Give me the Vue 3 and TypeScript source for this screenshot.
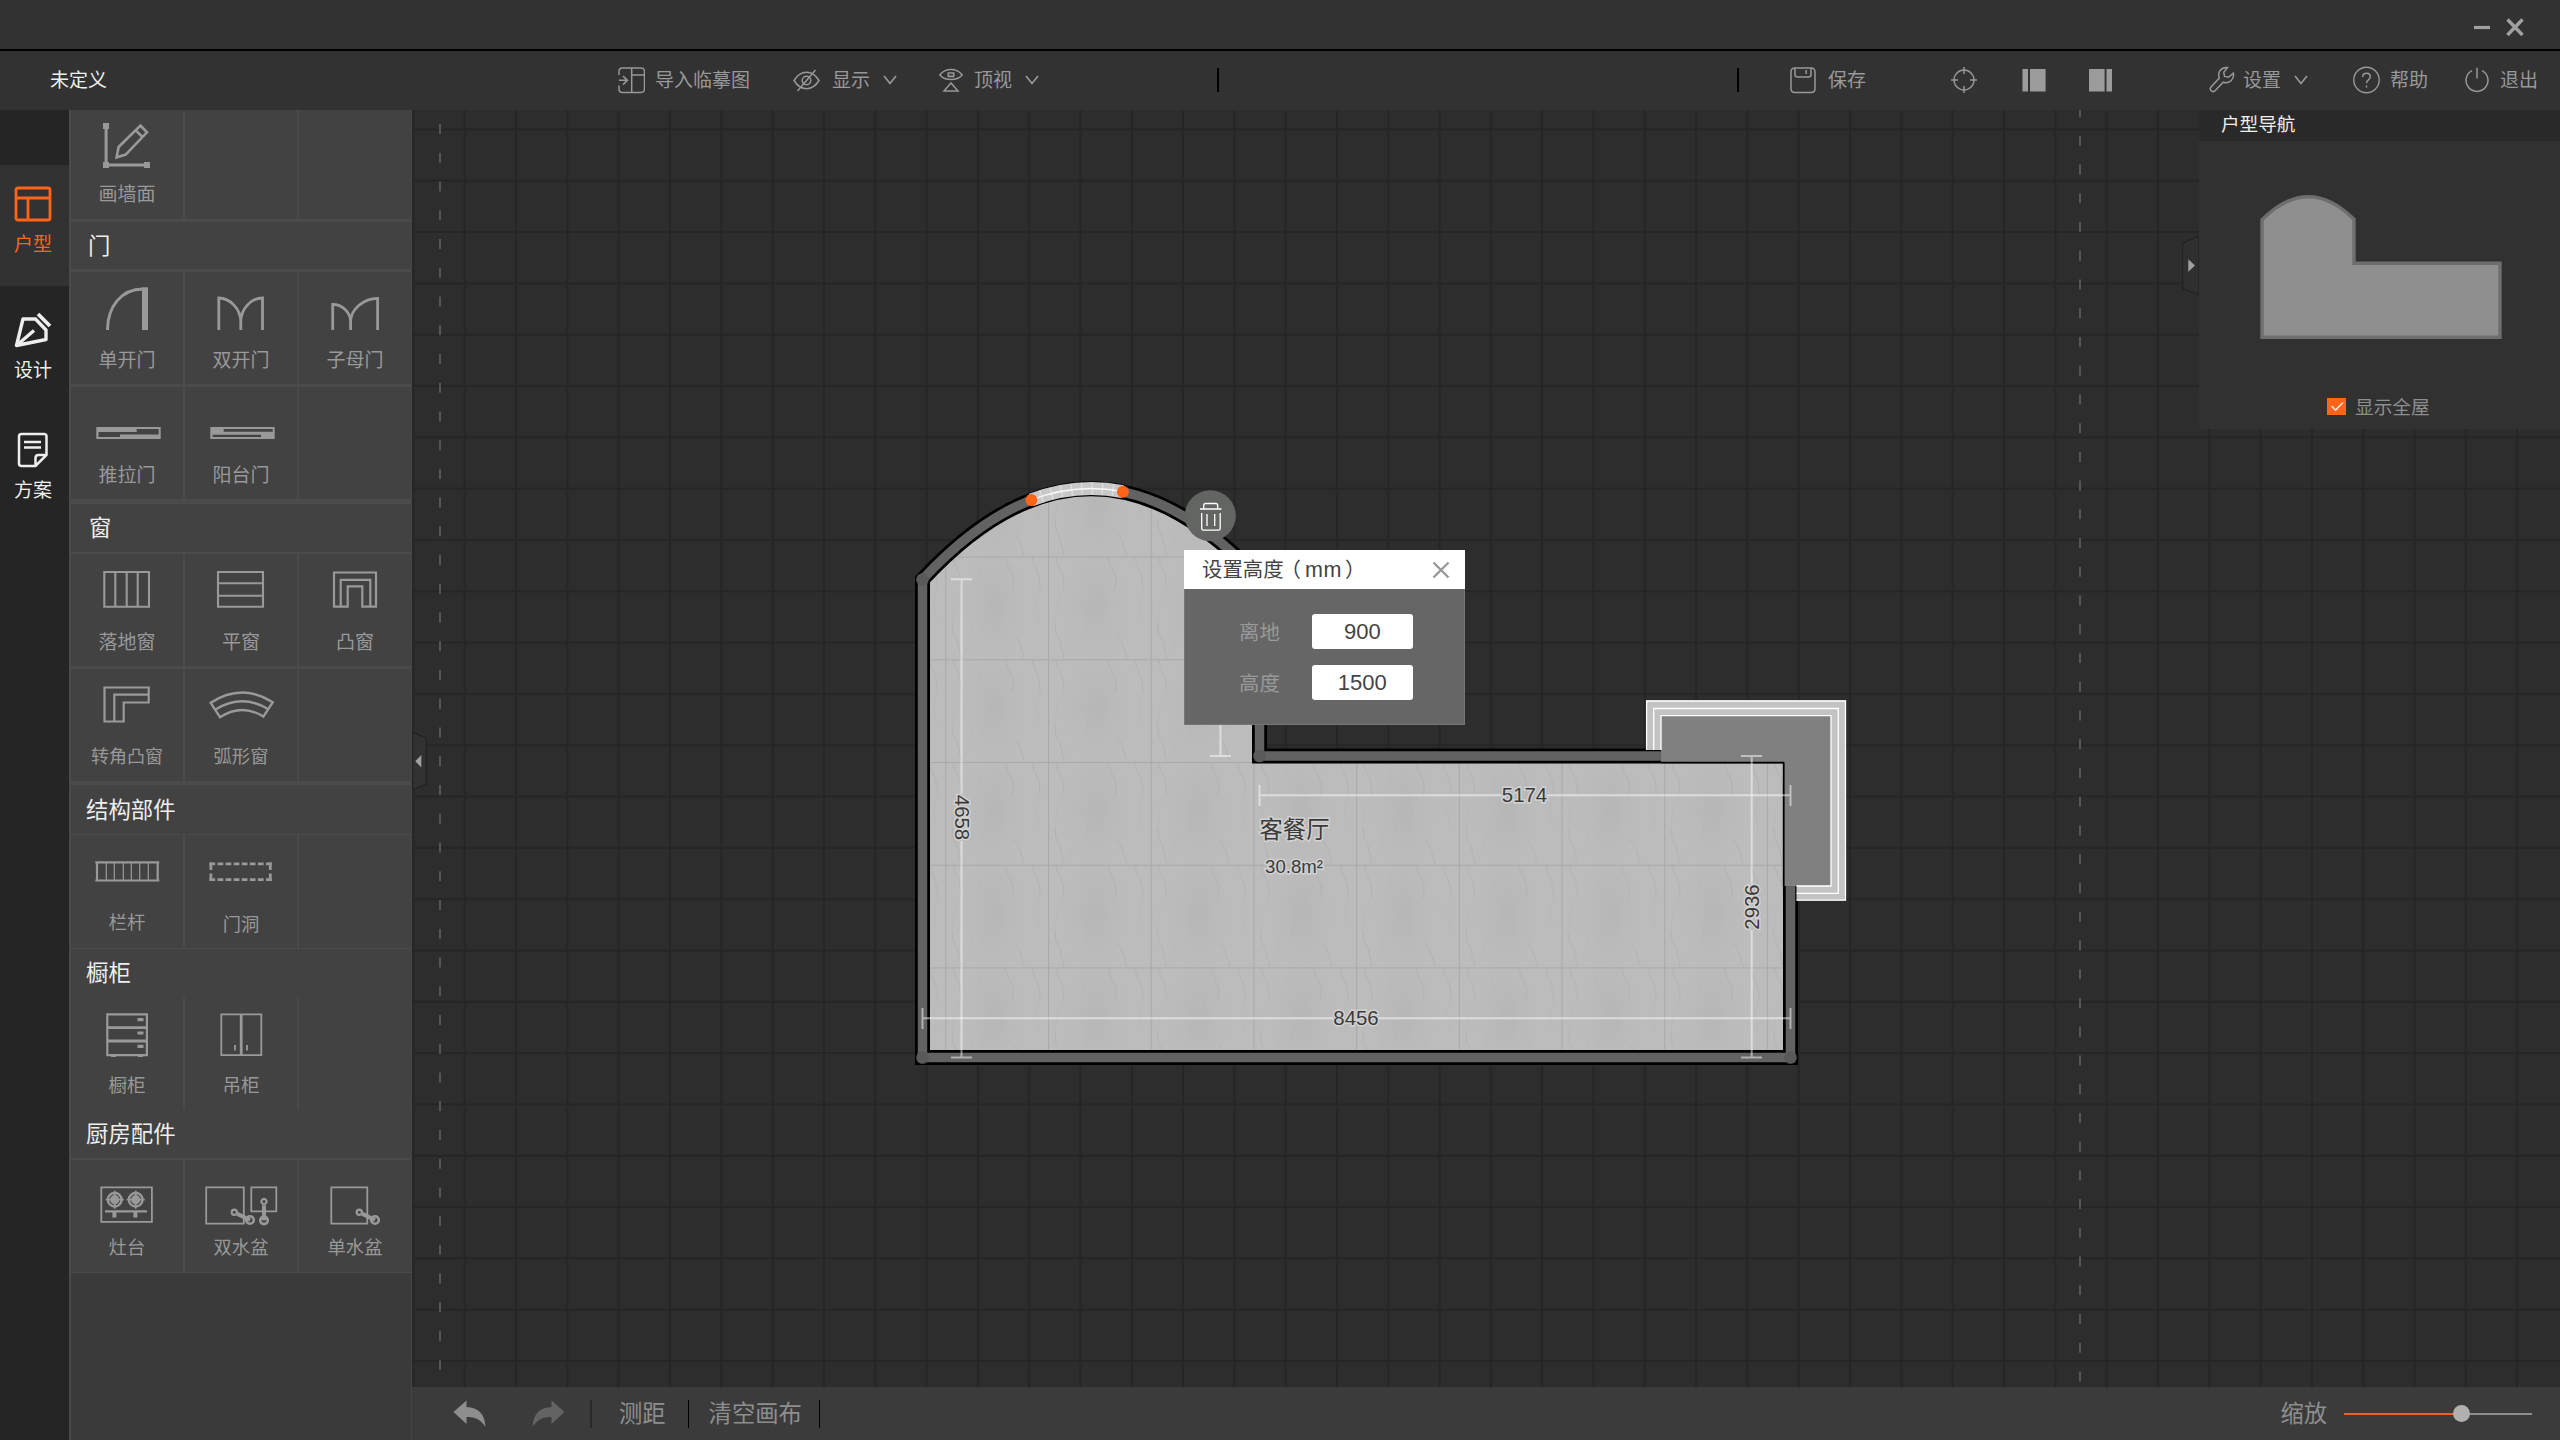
<script setup lang="ts">
interface Shape {
  d: string
  w?: number
  fill?: boolean
  dash?: string
}
interface Cell {
  label: string
  shapes: Shape[]
  size?: number
  drop?: number
}
interface Band {
  kind: 'head' | 'row'
  h: number
  line: number
  title?: string
  indent?: number
  shift?: number
  cells?: (Cell | null)[]
}

const box = (x: number, y: number, w: number, h: number) => `M${x} ${y}h${w}v${h}h${-w}Z`
const ring = (cx: number, cy: number, r: number) =>
  `M${cx - r} ${cy}a${r} ${r} 0 1 0 ${2 * r} 0a${r} ${r} 0 1 0 ${-2 * r} 0Z`

const tap = (ax: number, ay: number, bx: number, by: number): Shape[] => [
  { d: ring(ax, ay, 2.6), w: 2.2 },
  { d: `M${ax + (bx - ax) * 0.2} ${ay + (by - ay) * 0.2}L${bx} ${by}`, w: 4 },
  { d: ring(bx, by, 3.8), w: 2.6 },
]

const burner = (cx: number, cy: number): Shape[] => [
  { d: ring(cx, cy, 6.8), w: 2.4 },
  { d: ring(cx, cy, 4.6), fill: true },
  { d: `M${cx - 9} ${cy}h18M${cx} ${cy - 9}v18`, w: 1.8 },
]

const bands: Band[] = [
  {
    kind: 'row', h: 109, line: 3, shift: -4,
    cells: [
      {
        label: '画墙面',
        shapes: [
          { d: 'M35.1 19V59H76', w: 3 },
          { d: box(32, 17, 6, 6) + box(32, 56, 6, 6) + box(73, 56, 6, 6), fill: true },
          { d: 'M69.4 19.5L76 26.3L54.7 48.6L45.6 51.3L47.6 41ZM64.8 24.3L71.4 31', w: 2.6 },
        ],
      },
      null, null,
    ],
  },
  { kind: 'head', h: 47, line: 3, title: '门', indent: 17 },
  {
    kind: 'row', h: 112, line: 3,
    cells: [
      {
        label: '单开门',
        shapes: [
          { d: 'M36.5 58C36.5 35 50 17 72 17', w: 3 },
          { d: box(71, 15.3, 6, 42.7), fill: true },
        ],
      },
      { label: '双开门', shapes: [{ d: 'M33.8 58V26C45 26 55.8 37 55.8 50V58M77.5 58V26C66 26 55.8 37 55.8 50', w: 2.8 }] },
      { label: '子母门', shapes: [{ d: 'M33.7 58V32.3C43 32.3 51.6 40 51.6 50V58M78.6 58V26.3C65 26.3 51.6 37 51.6 50', w: 2.8 }] },
    ],
  },
  {
    kind: 'row', h: 112, line: 5,
    cells: [
      { label: '推拉门', shapes: [{ d: box(25.3, 40, 64.4, 12) + 'M27.5 45H65.7V42H87.7V47.5H49V50H27.5Z', fill: true }] },
      { label: '阳台门', shapes: [{ d: box(25.3, 40, 64.4, 12) + box(38.7, 42, 49, 2.7) + box(27.7, 47.7, 48.3, 2.3), fill: true }] },
      null,
    ],
  },
  { kind: 'head', h: 48, line: 2, title: '窗', indent: 18 },
  {
    kind: 'row', h: 112, line: 3,
    cells: [
      { label: '落地窗', shapes: [{ d: box(33.3, 18, 44.7, 34.7) + 'M44.3 18v34.7M55.7 18v34.7M66.7 18v34.7', w: 2.1 }] },
      { label: '平窗', shapes: [{ d: box(33, 18, 45, 34.7) + 'M33 29.3h45M33 41.7h45', w: 2.1 }] },
      {
        label: '凸窗',
        shapes: [{ d: 'M35 52.7V18.5H77V52.7H63.3V32.3H48.7V52.7ZM41.7 52.7V25.8H71.3V52.7', w: 2.2 }],
      },
    ],
  },
  {
    kind: 'row', h: 112, line: 4,
    cells: [
      { label: '转角凸窗', size: 18, shapes: [{ d: 'M33.5 18.5H77.7V33.5H52.7V52.5H33.5ZM77.7 25.7H43.3V52.5', w: 2.2 }] },
      {
        label: '弧形窗', size: 18.3,
        shapes: [{ d: 'M25.7 33.8Q57 13.6 87.7 33.3L78.3 47.6Q57 34 35 48.2ZM31 40.2Q57 24.4 83 40', w: 2.4 }],
      },
      null,
    ],
  },
  { kind: 'head', h: 49, line: 1, title: '结构部件', indent: 15 },
  {
    kind: 'row', h: 113, line: 1,
    cells: [
      {
        label: '栏杆', size: 18.3,
        shapes: [
          { d: 'M24.3 27.3h64M24.3 45.5h64M26 27.3v18M86.7 27.3v18', w: 2.2 },
          { d: 'M35.3 27.3v18M43.3 27.3v18M52.3 27.3v18M60.3 27.3v18M68.7 27.3v18M77.3 27.3v18', w: 1.2 },
        ],
      },
      {
        label: '门洞', size: 18.3, drop: 2,
        shapes: [
          { d: 'M24.5 28.8h62.2M24.5 44.6h62.2', w: 2.8, dash: '5.7 2.37' },
          { d: 'M25.9 27.4v18.6M85.3 27.4v18.6', w: 2.8, dash: '7.6 3.4' },
        ],
      },
      null,
    ],
  },
  { kind: 'head', h: 48, line: 0, title: '橱柜', indent: 15 },
  {
    kind: 'row', h: 112, line: 0,
    cells: [
      {
        label: '橱柜', size: 18.6,
        shapes: [
          { d: box(36.3, 17.3, 39.6, 40.8), w: 2.2 },
          { d: 'M36.3 30.7h39.6M36.3 44h39.6', w: 2.8 },
          { d: 'M66.5 22.7h6M66.5 36h6M66.5 49.3h6', w: 3.2 },
          { d: 'M40 59.2h5M67 59.2h5', w: 1.6 },
        ],
      },
      {
        label: '吊柜', size: 18.6,
        shapes: [{ d: box(36.3, 17.3, 40, 40.8) + 'M50 48v5.6M62 48v5.6', w: 1.8 }, { d: 'M56.2 17.3v40.8', w: 2.8 }],
      },
      null,
    ],
  },
  { kind: 'head', h: 49, line: 2, title: '厨房配件', indent: 15 },
  {
    kind: 'row', h: 112, line: 1,
    cells: [
      {
        label: '灶台', size: 18.3,
        shapes: [
          { d: box(30.3, 27.3, 50.6, 34.6), w: 1.8 },
          ...burner(43.7, 39.7),
          ...burner(64.7, 39.7),
          { d: 'M34 51.4h42', w: 2.4 },
          { d: 'M43.4 52v5.4M64.4 52v5.4', w: 4 },
        ],
      },
      {
        label: '双水盆', size: 18.3,
        shapes: [
          { d: box(21.2, 27.3, 37.6, 36.3) + box(66.3, 27.3, 25, 24), w: 1.8 },
          ...tap(49.3, 52.3, 65, 60),
          ...tap(79, 41.5, 79, 60.3),
        ],
      },
      {
        label: '单水盆', size: 18.3,
        shapes: [{ d: box(32.3, 27.3, 36, 36.3), w: 1.8 }, ...tap(60.3, 52.3, 76, 60)],
      },
    ],
  },
]

interface Tool {
  label?: string
  gap: number
  w: number
  pad?: number
  chevron?: boolean
  divider?: boolean
  shapes: Shape[]
}

const tools: Tool[] = [
  {
    label: '导入临摹图', gap: 511, w: 27, pad: 10,
    shapes: [
      { d: 'M1 9V5.5Q1 2 4.5 2H23Q26.5 2 26.5 5.5V23Q26.5 26.5 23 26.5H4.5Q1 26.5 1 23V19.5M13.7 2V26.5M13.7 9H26.5', w: 1.5 },
      { d: 'M1 14.3H9.2M5 10L9.4 14.3L5 18.6', w: 1.6 },
    ],
  },
  {
    label: '显示', gap: 43, w: 27, pad: 12, chevron: true,
    shapes: [
      { d: 'M1 14.5Q6 6.3 13.5 6.3T26 14.5Q21 22.7 13.5 22.7T1 14.5ZM22.5 4L4.5 25', w: 1.5 },
      { d: ring(13.5, 14.5, 4.3), w: 1.5 },
    ],
  },
  {
    label: '顶视', gap: 42, w: 24, pad: 11, chevron: true,
    shapes: [
      { d: 'M.8 9Q5 3.6 12 3.6T23.2 9Q19 13.6 12 13.6T.8 9ZM12 17L5 25H19Z', w: 1.5 },
      { d: box(9.3, 7, 5.4, 3.4), w: 1.6 },
    ],
  },
  { gap: 178, w: 2, divider: true, shapes: [] },
  { gap: 518, w: 2, divider: true, shapes: [] },
  {
    label: '保存', gap: 51, w: 26, pad: 12,
    shapes: [
      { d: 'M5 2H21Q25 2 25 6V22.5Q25 26.5 21 26.5H5Q1 26.5 1 22.5V6Q1 2 5 2ZM5 2.5V8.5Q5 11 7.5 11H18.5Q21 11 21 8.5V2.5M16.2 4V8', w: 1.5 },
    ],
  },
  {
    gap: 84, w: 28,
    shapes: [
      { d: ring(14, 14, 10), w: 1.4 },
      { d: 'M14 1V8M14 20V27M1 14H8M20 14H27', w: 1.5 },
    ],
  },
  { gap: 44, w: 24, shapes: [{ d: box(0.5, 3, 5.5, 22.5) + box(8, 3, 15.6, 22.5), fill: true }] },
  { gap: 43, w: 23, shapes: [{ d: box(0, 3, 15.6, 22.5) + box(17.5, 3, 5.5, 22.5), fill: true }] },
  {
    label: '设置', gap: 97, w: 26, pad: 8, chevron: true,
    shapes: [
      {
        d: 'M18.5 1.5A7.6 7.6 0 0 0 10.3 12L1.8 21.2Q.6 22.8 2 24.6Q3.6 26.4 5.6 25.2L14.3 16.2A7.6 7.6 0 0 0 24.3 7.2L19.6 11.2L15.6 10.4L14.7 6.4Z',
        w: 1.5,
      },
    ],
  },
  {
    label: '帮助', gap: 45, w: 27, pad: 10,
    shapes: [
      { d: ring(13.5, 14, 12.7), w: 1.4 },
      { d: 'M9.7 11Q9.7 7.3 13.5 7.3T17.3 11C17.3 13.7 13.5 13.8 13.5 17.3M13.5 19.5V21.6', w: 1.5 },
    ],
  },
  {
    label: '退出', gap: 37, w: 24, pad: 11,
    shapes: [{ d: 'M7 4.6A11 11 0 1 0 17 4.6M12 1.8V12.5', w: 1.5 }],
  },
]

const cellPitch = 51.31
const columns = Array.from({ length: 42 }, (_, i) => 413.4 + i * cellPitch)
const lines = Array.from({ length: 25 }, (_, i) => 129.5 + i * cellPitch)

const room = 'M922.5 579.5Q1091 398 1259.5 579.5V756H1790.5V1057.5H922.5Z'
const pane = 'M1031.3 499.9Q1077 482.5 1122.7 491.7'
const corners = [
  [922.5, 579.5],
  [1259.5, 756],
  [922.5, 1057.5],
  [1790.5, 1057.5],
]
</script>

<template>
  <div class="app">
    <header class="titlebar">
      <svg class="win" width="54" height="22" viewBox="0 0 54 22">
        <path d="M2 11.5H18" stroke-width="3.2" />
        <path d="M35.5 3.5L50.5 19M50.5 3.5L35.5 19" stroke-width="3.4" />
      </svg>
    </header>

    <nav class="toolbar">
      <span class="doc">未定义</span>
      <div v-for="(t, i) in tools" :key="i" class="tool" :style="{ marginLeft: t.gap + 'px' }">
        <i v-if="t.divider" class="bar"></i>
        <svg v-else :width="t.w" height="28" :viewBox="`0 0 ${t.w} 28`">
          <path
            v-for="(s, k) in t.shapes" :key="k" :d="s.d"
            :fill="s.fill ? '#9b9b9b' : 'none'" :stroke="s.fill ? 'none' : '#989898'" :stroke-width="s.w"
          />
        </svg>
        <span v-if="t.label" :style="{ marginLeft: t.pad + 'px' }">{{ t.label }}</span>
        <svg v-if="t.chevron" class="chev" width="14" height="10" viewBox="0 0 14 10">
          <path d="M1 1L7 8.5L13 1" fill="none" stroke="#989898" stroke-width="1.7" />
        </svg>
      </div>
    </nav>

    <div class="body">
      <aside class="rail">
        <div class="tab active">
          <svg width="38" height="36" viewBox="0 0 38 36">
            <path d="M4 2H34Q36 2 36 4V32Q36 34 34 34H4Q2 34 2 32V4Q2 2 4 2ZM2 12H36M14 12V34" stroke-width="2.8" />
          </svg>
          <span>户型</span>
        </div>
        <div class="tab design">
          <svg width="38" height="36" viewBox="0 0 38 36">
            <path d="M2.5 33.5L9 7H21.5L32 18V27.5ZM2.5 33.5L20 18.5" stroke-width="3.4" stroke-linejoin="round" />
            <path d="M24 2L36 14" stroke-width="3.8" />
          </svg>
          <span>设计</span>
        </div>
        <div class="tab plan">
          <svg width="38" height="36" viewBox="0 0 38 36">
            <path d="M7.5 2H30Q32.5 2 32.5 4.5V23L21.5 34H7.5Q5 34 5 31.5V4.5Q5 2 7.5 2ZM32.5 23H24.5Q21.5 23 21.5 26V34M10 10H27M10 15.5H27" stroke-width="2.5" />
          </svg>
          <span>方案</span>
        </div>
      </aside>

      <aside class="palette">
        <template v-for="(b, i) in bands" :key="i">
          <div
            v-if="b.kind === 'head'" class="head"
            :style="{ height: b.h + 'px', borderBottomWidth: b.line + 'px', paddingLeft: b.indent + 'px' }"
          >
            <span>{{ b.title }}</span>
          </div>
          <div v-else class="row" :style="{ height: b.h + 'px', borderBottomWidth: b.line + 'px' }">
            <div v-for="(c, k) in b.cells" :key="k" class="cell">
              <template v-if="c">
                <svg width="112" height="70" viewBox="0 0 112 70" :style="{ marginTop: (b.shift || 0) + 'px' }">
                  <path
                    v-for="(s, n) in c.shapes" :key="n" :d="s.d" fill-rule="evenodd"
                    :fill="s.fill ? '#999' : 'none'" :stroke="s.fill ? 'none' : '#999'"
                    :stroke-width="s.w" :stroke-dasharray="s.dash"
                  />
                </svg>
                <span :style="{ fontSize: (c.size || 19) + 'px', paddingTop: (c.drop || 0) + 'px' }">{{ c.label }}</span>
              </template>
            </div>
          </div>
        </template>
      </aside>

      <main class="stage">
        <svg class="canvas" width="2148" height="1277" viewBox="412 110 2148 1277">
          <defs>
            <pattern id="marble" x="1048" y="762" width="102.7" height="102.7" patternUnits="userSpaceOnUse">
              <rect width="103" height="103" fill="#bcbcbc" />
              <ellipse cx="48" cy="48" rx="34" ry="64" fill="url(#shade)" />
              <g fill="none" stroke="#a6a6a6" stroke-width=".9" opacity=".6">
                <path d="M8 0C9 12 15 14 15 22L16 32" />
                <path d="M60 0C61 10 68 16 68 24L67 33" />
                <path d="M87 0C88 10 93 14 94 22L95 32" />
                <path d="M7 66L8 76L12 84L16 102" />
                <path d="M69 78L74 86L79 102" />
              </g>
              <g fill="none" stroke="#afafaf" stroke-width=".7" opacity=".45">
                <path d="M16 32L9 46L7 66M27 70Q26 88 18 100M95 32L91 46L94 66" />
                <path d="M33 8L36 24M52 30L56 52L54 70M40 58L38 78" />
              </g>
              <path d="M.5 103V.5H103" fill="none" stroke="#a9a9a9" stroke-width="1.1" />
            </pattern>
            <radialGradient id="shade">
              <stop offset="0" stop-color="#b4b4b4" stop-opacity=".7" />
              <stop offset="1" stop-color="#b8b8b8" stop-opacity="0" />
            </radialGradient>
          </defs>

          <g stroke="#262626" stroke-width="2">
            <line v-for="x in columns" :key="'c' + x" :x1="x" :x2="x" y1="110" y2="1387" />
            <line v-for="y in lines" :key="'l' + y" :y1="y" :y2="y" x1="412" x2="2560" />
          </g>
          <g stroke="#565656" stroke-width="2" stroke-dasharray="10 18.74">
            <path d="M440 124V1372" />
            <path d="M2080 107V1384" />
          </g>

          <path :d="room" fill="url(#marble)" stroke="#000" stroke-width="15" />
          <path :d="room" fill="none" stroke="#626262" stroke-width="9.5" />
          <circle v-for="(p, i) in corners" :key="i" :cx="p[0]" :cy="p[1]" r="6.3" fill="#595959" />

          <path d="M1661 715.5H1831.5V886H1784.5V762.5H1661Z" fill="#808080" />
          <path d="M1661 762.5H1783.5V886" fill="none" stroke="#000" stroke-width="1.4" />
          <path d="M1646 750V700.5H1846V900.5H1796.5V886H1831V715.5H1661V750Z" fill="#c3c3c3" />
          <g fill="none" stroke="#fff" stroke-width="1.3">
            <path d="M1646.6 750V701H1845.5V900.2H1796.5" />
            <path d="M1653.7 750V708.5H1838.3V893.3H1796.5" />
            <path d="M1661 750V715.7H1831V886H1796.5" />
          </g>

          <path :d="pane" fill="none" stroke="#c8c8c8" stroke-width="13" />
          <path :d="pane" fill="none" stroke="#e6e6e6" stroke-width="12" stroke-dasharray="1 9.3" />
          <path :d="pane" fill="none" stroke="#f8f8f8" stroke-width="1.3" />
          <circle cx="1031.4" cy="499.9" r="6" fill="#ff6418" />
          <circle cx="1122.9" cy="491.8" r="6" fill="#ff6418" />

          <g fill="none" stroke="#fff" stroke-opacity=".5" stroke-width="2">
            <path d="M951 579.3H972M961.5 579.3V794M961.5 841V1057.5M951 1057.5H972" />
            <path d="M922.5 1008V1029M922.5 1018.2H1333M1379 1018.2H1790.5M1790.5 1008V1029" />
            <path d="M1259.5 785V806M1259.5 795.2H1501M1547 795.2H1790.5M1790.5 785V806" />
            <path d="M1741 756H1762M1751.7 756V884M1751.7 930V1057.5M1741 1057.5H1762" />
            <path d="M1220.5 579V756M1210 756H1231" />
          </g>

          <g class="dims">
            <text x="1356" y="1025.3">8456</text>
            <text x="1524.5" y="802.3">5174</text>
            <text transform="translate(954.7 817.5) rotate(90)">4658</text>
            <text transform="translate(1758.5 907) rotate(-90)">2936</text>
            <text class="name" x="1294.5" y="838">客餐厅</text>
            <text class="area" x="1294" y="873.3">30.8m²</text>
          </g>

          <circle cx="1210.3" cy="515.7" r="25.5" fill="#636563" />
          <path d="M1200 509H1221.5M1203.7 508.5V505.5Q1203.7 503.5 1205.7 503.5H1215.7Q1217.7 503.5 1217.7 505.5V508.5M1201.7 513V528.5Q1201.7 530.2 1203.4 530.2H1218.6Q1220.2 530.2 1220.2 528.5V513M1207 514V526M1214.7 514V526" fill="none" stroke="#fff" stroke-width="1.3" />

          <path d="M412.5 732L426.3 738.5V784L412.5 790Z" fill="#313131" stroke="#222" stroke-width="1.2" />
          <path d="M415.3 761.2L421.3 755V767.4Z" fill="#a0a0a0" />
          <path d="M2199 236L2182.7 243V288.5L2199 294.8Z" fill="#2f2f2f" stroke="#222" stroke-width="1.2" />
          <path d="M2195 265.5L2188.3 259.3V271.7Z" fill="#a0a0a0" />
        </svg>

        <section class="dialog">
          <div class="dialog-head">
            <span>设置高度<em class="open">（</em><span class="unit">mm</span><em>）</em></span>
            <svg width="18" height="18" viewBox="0 0 18 18">
              <path d="M1.500 1.500L16.500 16.500M16.500 1.500L1.500 16.500" stroke="#999" stroke-width="2.400" />
            </svg>
          </div>
          <div class="field"><span>离地</span><div class="input">900</div></div>
          <div class="field"><span>高度</span><div class="input">1500</div></div>
        </section>

        <section class="navigator">
          <div class="nav-head">户型导航</div>
          <svg width="361" height="240" viewBox="2199 141 361 240">
            <path d="M2262 219.700Q2308 174 2354 219.200V263.200H2500V337.200H2262Z" fill="#8f8f8f" stroke="#6e6e6e" stroke-width="3.400" />
          </svg>
          <div class="nav-check">
            <svg width="19" height="17" viewBox="0 0 19 17">
              <rect width="19" height="17" fill="#ff6418" />
              <path d="M4.500 8L8.500 12L16 4.500" fill="none" stroke="#ffe3d5" stroke-width="1.600" />
            </svg>
            <span>显示全屋</span>
          </div>
        </section>

        <footer class="status">
          <svg class="undo" width="33" height="28" viewBox="0 0 33 28">
            <path d="M.5 12L13.500 .5V7C25 7.500 32 14 32.500 27C27 19 22 17 13.500 17V24Z" fill="#8e8e8e" />
          </svg>
          <svg class="redo" width="33" height="28" viewBox="0 0 33 28">
            <path d="M32.500 12L19.500 .5V7C8 7.500 1 14 .5 27C6 19 11 17 19.500 17V24Z" fill="#636363" />
          </svg>
          <i class="sep soft"></i>
          <span class="measure">测距</span>
          <i class="sep"></i>
          <span class="clear">清空画布</span>
          <i class="sep"></i>
          <span class="zoom">缩放</span>
          <div class="slider"><b></b></div>
        </footer>
      </main>
    </div>
  </div>
</template>

<style>
body {
  margin: 0;
  background: #2d2d2d;
}
</style>

<style scoped>
.app {
  width: 2560px;
  height: 1440px;
  overflow: hidden;
  display: flex;
  flex-direction: column;
  background: #323232;
  color: #999;
  font-family: 'Noto Sans CJK SC', 'Noto Sans', sans-serif;
  font-size: 19px;
  line-height: 1;
  white-space: nowrap;
}
svg {
  display: block;
  flex: none;
}
.titlebar {
  box-sizing: border-box;
  height: 51px;
  border-bottom: 2px solid #000;
  display: flex;
  justify-content: flex-end;
  padding: 16px 34px 0 0;
}
.win path {
  fill: none;
  stroke: #a0a0a0;
}
.toolbar {
  height: 59px;
  box-sizing: border-box;
  padding-bottom: 1px;
  display: flex;
  align-items: center;
}
.toolbar span {
  padding-bottom: 3px;
}
.doc {
  margin-left: 50px;
  color: #eee;
}
.tool {
  display: flex;
  align-items: center;
}
.chev {
  margin-left: 13px;
}
.bar {
  width: 2px;
  height: 24px;
  background: #000;
}
.body {
  flex: 1;
  min-height: 0;
  display: flex;
}
.rail {
  width: 69px;
  background: #252525;
  padding-top: 55px;
  box-sizing: border-box;
  flex: none;
}
.tab {
  display: flex;
  flex-direction: column;
  align-items: center;
  color: #eee;
}
.tab path {
  fill: none;
  stroke: #eee;
}
.tab.active {
  height: 121px;
  box-sizing: border-box;
  padding: 21px 3px 0 0;
  background: #323232;
  color: #ff6418;
}
.tab.active path {
  stroke: #ff6418;
}
.tab span {
  margin-top: 11px;
}
.tab.design {
  padding: 26px 3px 0 0;
}
.tab.plan {
  padding: 54px 3px 0 0;
}
.palette {
  width: 340px;
  flex: none;
  border-left: 2px solid #4a4a4a;
  border-right: 1px solid #454545;
  background: #3a3a3a;
}
.head {
  display: flex;
  align-items: center;
  background: #424242;
  border-bottom: 0 solid #4b4b4b;
  color: #eee;
  font-size: 22.4px;
}
.head span {
  padding-bottom: 3px;
}
.row {
  display: flex;
  background: #424242;
  border-bottom: 0 solid #4b4b4b;
}
.cell {
  width: 112px;
  flex: none;
  border-right: 2px solid #4a4a4a;
  display: flex;
  flex-direction: column;
  align-items: center;
}
.cell:last-child {
  border-right: 0;
}
.cell span {
  line-height: 33px;
}
.stage {
  position: relative;
  flex: 1;
  display: flex;
  flex-direction: column;
  background: #2d2d2d;
}
.dims text {
  font-family: 'Liberation Sans', 'Noto Sans CJK SC', sans-serif;
  font-size: 20.4px;
  fill: #3a3a3a;
  stroke: #d2d2d2;
  stroke-width: 3px;
  paint-order: stroke;
  text-anchor: middle;
}
.dims .name {
  font-size: 23.3px;
}
.dims .area {
  font-size: 18.6px;
}
.dialog {
  position: absolute;
  left: 772px;
  top: 440px;
  width: 281px;
  height: 175px;
  background: #666;
  box-shadow: inset 0 0 0 1px #767676;
  font-size: 20.4px;
}
.dialog-head {
  height: 39px;
  box-sizing: border-box;
  background: #fff;
  color: #444;
  display: flex;
  align-items: center;
  justify-content: space-between;
  padding: 0 15px 0 18px;
  margin-bottom: 25px;
}
.dialog-head em {
  font-style: normal;
}
.dialog-head .open {
  margin-left: -3px;
}
.unit {
  margin: 0 3px 0 4px;
  font-family: 'Liberation Sans', sans-serif;
  font-size: 21.5px;
  letter-spacing: 0.6px;
}
.field {
  display: flex;
  align-items: center;
  padding-left: 55px;
  margin-bottom: 16px;
}
.input {
  margin-left: 32px;
  width: 101px;
  height: 35px;
  line-height: 35px;
  border-radius: 3px;
  background: #fff;
  color: #444;
  text-align: center;
  font-family: 'Liberation Sans', sans-serif;
  font-size: 22px;
}
.navigator {
  position: absolute;
  right: 0;
  top: 0;
  width: 361px;
  height: 319px;
  background: #313131;
}
.nav-head {
  height: 31px;
  line-height: 25px;
  padding-left: 22px;
  background: #292929;
  color: #eee;
  font-size: 18.6px;
}
.nav-check {
  display: flex;
  align-items: center;
  margin: 16px 0 0 128px;
  color: #8e8e8e;
  font-size: 18.7px;
}
.nav-check span {
  margin-left: 9px;
}
.status {
  height: 53px;
  background: #3b3b3b;
  display: flex;
  align-items: center;
  color: #8e8e8e;
  font-size: 23.3px;
}
.status span {
  padding-bottom: 2px;
}
.undo {
  margin-left: 41px;
}
.redo {
  margin-left: 46px;
}
.sep {
  width: 1px;
  height: 28px;
  background: #000;
}
.sep.soft {
  width: 2px;
  margin-left: 25px;
  background: #292929;
}
.measure {
  margin: 0 22px 0 27px;
}
.clear {
  margin: 0 17px 0 20px;
}
.zoom {
  margin-left: auto;
}
.slider {
  display: flex;
  align-items: center;
  width: 188px;
  height: 2px;
  margin: 0 28px 0 17px;
  background: linear-gradient(90deg, #f0602a 0 117px, #8e8e8e 117px);
}
.slider b {
  width: 17px;
  height: 17px;
  margin-left: 109px;
  border-radius: 50%;
  background: #b0b0b0;
}
</style>
